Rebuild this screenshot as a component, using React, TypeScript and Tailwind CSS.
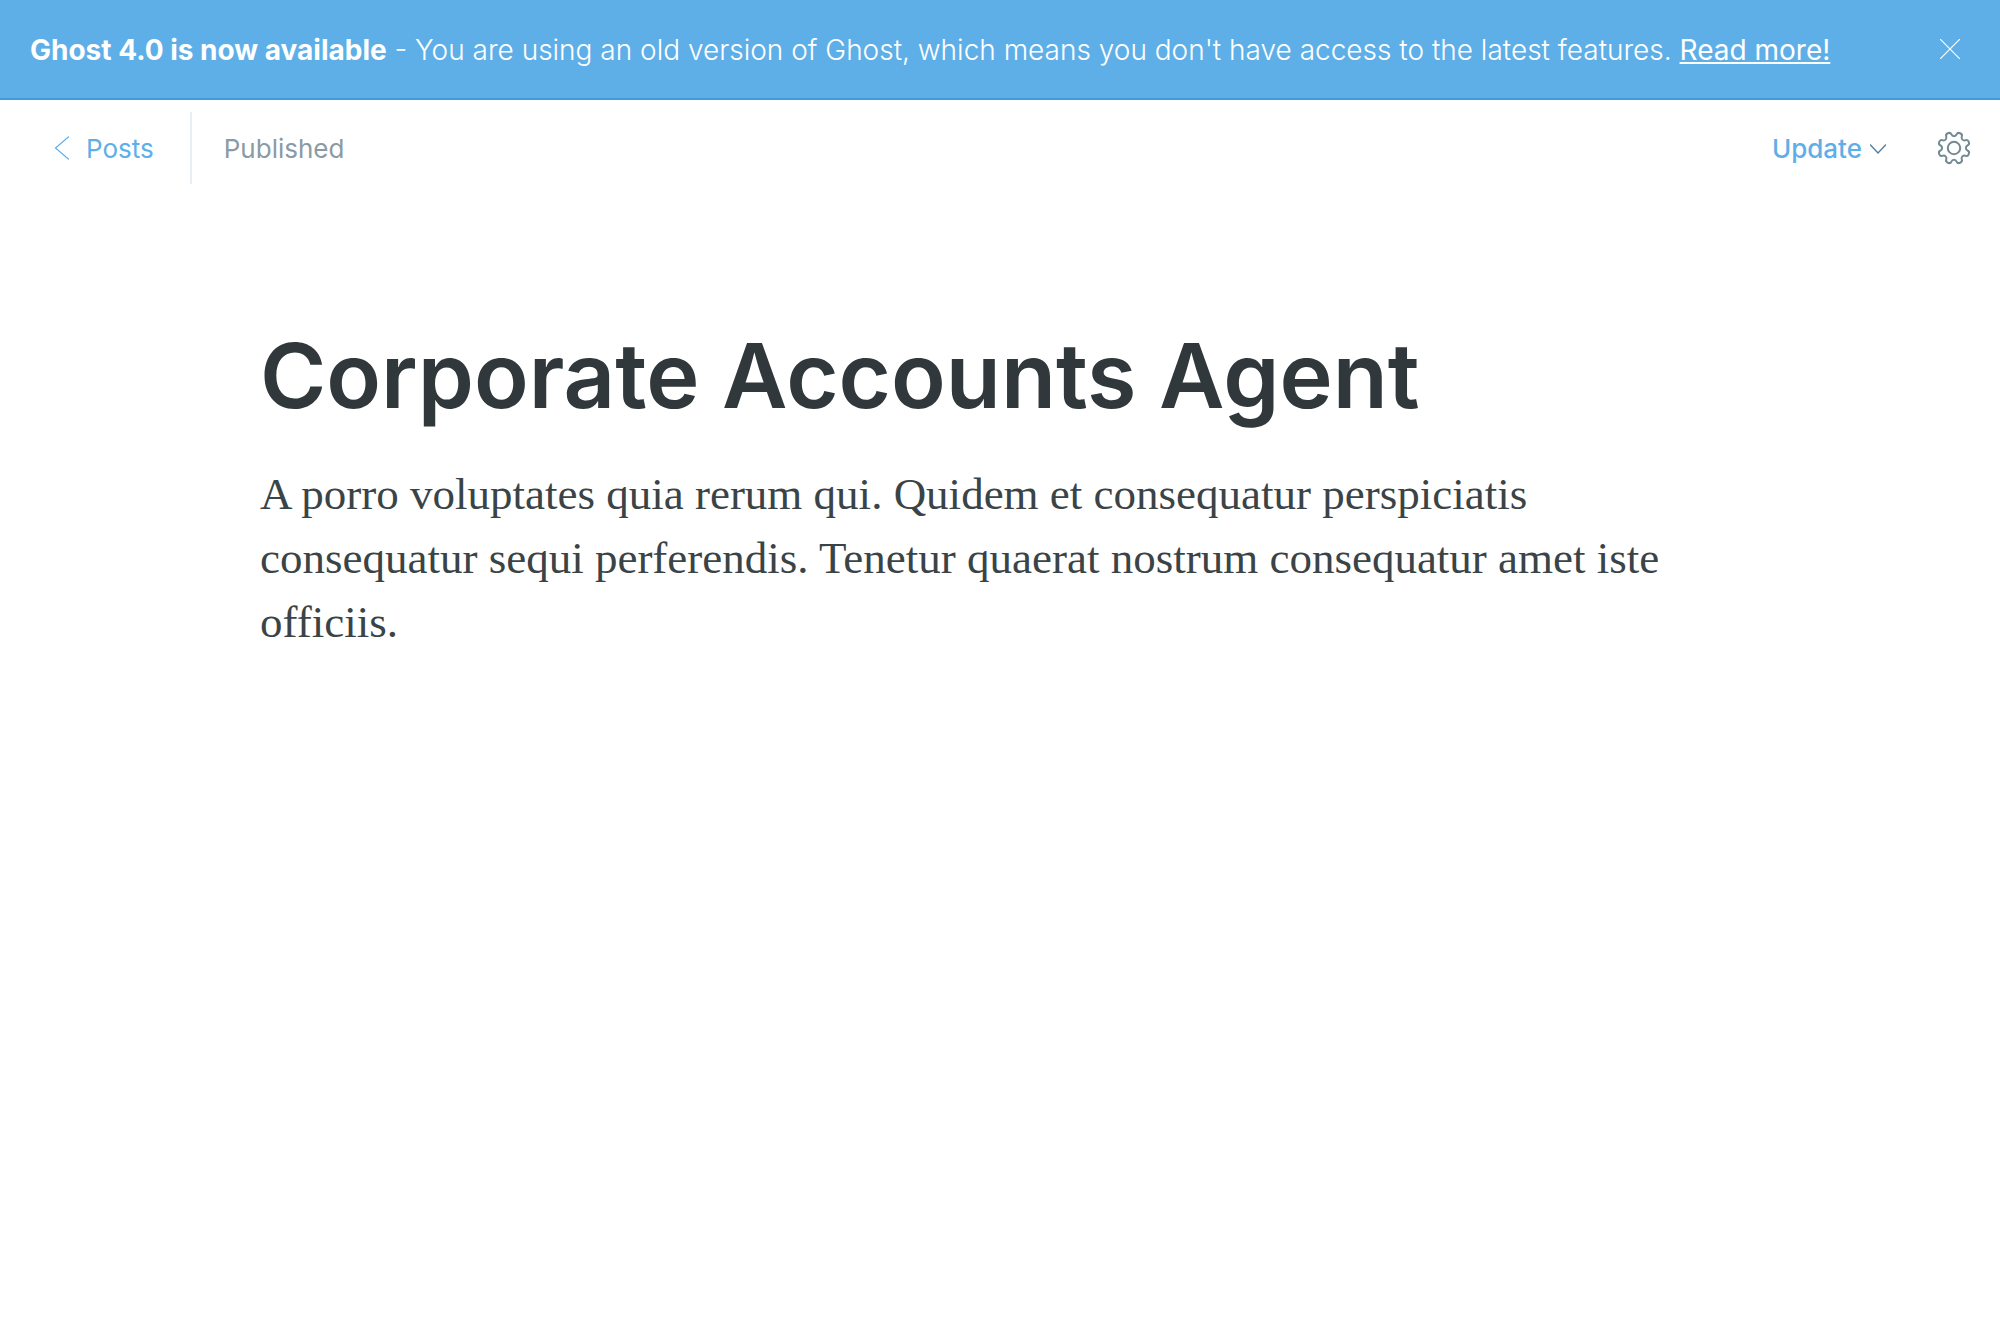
const polar = (r: number, deg: number): [number, number] => {
  const a = (deg * Math.PI) / 180;
  return [18 + r * Math.sin(a), 18 - r * Math.cos(a)];
};

// Closed outline of an eight-toothed cog with every corner rounded off.
function cogPath(): string {
  const pts: [number, number][] = [];
  for (let k = 0; k < 8; k++) {
    const c = k * 45;
    pts.push(polar(12, c - 9), polar(12, c + 9), polar(16.2, c + 13), polar(16.2, c + 32));
  }
  const mid = (a: [number, number], b: [number, number]) => [(a[0] + b[0]) / 2, (a[1] + b[1]) / 2];
  const f = (p: number[]) => `${p[0].toFixed(2)} ${p[1].toFixed(2)}`;
  let d = `M${f(mid(pts[pts.length - 1], pts[0]))}`;
  pts.forEach((p, i) => {
    d += `Q${f(p)} ${f(mid(p, pts[(i + 1) % pts.length]))}`;
  });
  return d + "Z";
}

function Banner() {
  return (
    <aside className="flex min-h-[100px] items-center justify-between border-b-2 border-[#459ade] bg-[#5eafe8] pl-[30px] pr-10 text-[28px] leading-10 text-white">
      <p className="pt-0.5 font-light">
        <strong className="font-bold">Ghost 4.0 is now available</strong> - You are using an old version of Ghost, which
        means you don't have access to the latest features.{" "}
        <a href="#" className="font-normal underline decoration-2 underline-offset-2">
          Read more!
        </a>
      </p>
      <button type="button" aria-label="Close" className="shrink-0">
        <svg width="20" height="20" viewBox="0 0 20 20" fill="none" stroke="currentColor" strokeWidth="1.2">
          <path d="M0 0L20 20M20 0L0 20" />
        </svg>
      </button>
    </aside>
  );
}

function Toolbar() {
  return (
    <header className="flex items-center justify-between pt-3 pl-[54px] pr-[28px] text-[26px] leading-9">
      <nav className="flex h-[72px] items-center">
        <a href="#" className="flex items-center gap-[17px] text-[#5eafe8]">
          <svg width="15" height="24" viewBox="0 0 15 24" fill="none" stroke="currentColor" strokeWidth="1.2">
            <path d="M15 0.5L1.5 12L15 23.5" />
          </svg>
          <span className="pt-0.5">Posts</span>
        </a>
        <span className="ml-9 h-[72px] w-0.5 bg-[#e5eff5]" />
        <span className="ml-8 pt-0.5 text-[#8a9ba6]">Published</span>
      </nav>
      <div className="flex items-center gap-[50px]">
        <button type="button" className="flex items-center gap-2 pt-0.5 font-medium text-[#5eafe8]">
          Update
          <svg width="16" height="10" viewBox="0 0 16 10" fill="none" stroke="#557d9d" strokeWidth="1.4">
            <path d="M0 0.5L8 9L16 0.5" />
          </svg>
        </button>
        <button type="button" aria-label="Settings" className="text-[#738a94]">
          <svg width="36" height="36" viewBox="0 0 36 36" fill="none" stroke="currentColor" strokeWidth="2">
            <path d={cogPath()} />
            <circle cx="18" cy="18" r="6.2" />
          </svg>
        </button>
      </div>
    </header>
  );
}

export default function App() {
  return (
    <div className="min-h-screen bg-white font-['Inter',sans-serif]">
      <Banner />
      <Toolbar />
      <main className="mx-auto max-w-[1480px] pt-[136px]">
        <h1 className="text-[90px] font-semibold leading-[112px] text-[#30383b]">Corporate Accounts Agent</h1>
        <p className="mt-[30px] font-['Liberation_Serif',serif] text-[45px] leading-[64px] text-[#3a4447]">
          A porro voluptates quia rerum qui. Quidem et consequatur perspiciatis consequatur sequi perferendis. Tenetur
          quaerat nostrum consequatur amet iste officiis.
        </p>
      </main>
    </div>
  );
}
